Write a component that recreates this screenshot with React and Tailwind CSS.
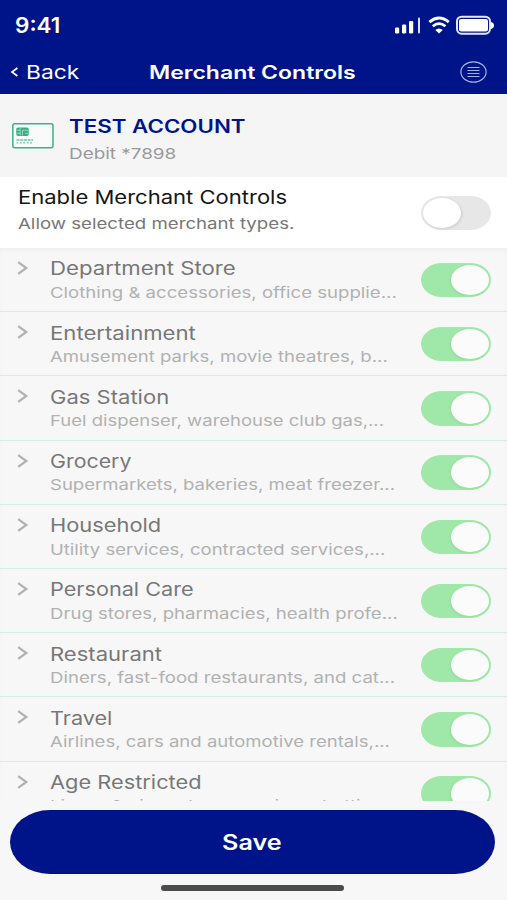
import { useLayoutEffect, useRef } from "react";

// Wide-set label: stretches its text horizontally to the given width.
function Wide({ width, className = "", children }) {
  const ref = useRef(null);
  useLayoutEffect(() => {
    const el = ref.current;
    el.style.transform = `scaleX(${width / el.offsetWidth})`;
  }, [width, children]);
  return (
    <div className="min-w-0" style={{ width }}>
      <span ref={ref} className={`inline-block origin-left whitespace-nowrap align-top ${className}`}>
        {children}
      </span>
    </div>
  );
}

const rows = [
  ["Department Store", 186, "Clothing & accessories, office supplie...", 347],
  ["Entertainment", 146, "Amusement parks, movie theatres, b...", 338],
  ["Gas Station", 119, "Fuel dispenser, warehouse club gas,...", 334],
  ["Grocery", 82, "Supermarkets, bakeries, meat freezer...", 345],
  ["Household", 111, "Utility services, contracted services,...", 335],
  ["Personal Care", 144, "Drug stores, pharmacies, health profe...", 348],
  ["Restaurant", 112, "Diners, fast-food restaurants, and cat...", 345],
  ["Travel", 62, "Airlines, cars and automotive rentals,...", 340],
  ["Age Restricted", 152, "Liquor & cigar stores, casinos, betti...", 327],
];

function Toggle({ on }) {
  return (
    <div
      className={`flex h-[34.5px] w-[70px] shrink-0 items-center px-[2px] [border-radius:21px/17.25px] ${
        on ? "justify-end bg-[#9fe8aa]" : "justify-start bg-[#e7e7e7]"
      }`}
    >
      <div
        className={`h-[30.5px] w-[38px] rounded-[50%] ${
          on ? "bg-[#fbfbfb] shadow-[-1px_1px_3px_rgba(0,0,0,0.06)]" : "bg-white shadow-[1px_1px_3px_rgba(0,0,0,0.12)]"
        }`}
      />
    </div>
  );
}

export default function App() {
  return (
    <div className="flex h-[900px] w-[507px] flex-col overflow-hidden bg-[#f7f7f7] font-[Inter,'Liberation_Sans',sans-serif]">
      <header className="h-[94px] shrink-0 bg-[#001489] text-white">
        <div className="flex h-[50px] items-center justify-between pl-[15px] pr-[12px]">
          <Wide width={45} className="pt-[1px] text-[21px] font-semibold leading-[50px]">9:41</Wide>
          <svg width="102" height="24" viewBox="393 12.5 102 24" fill="none">
            <rect x="395" y="27" width="4.2" height="6" rx="1.2" fill="#fff" />
            <rect x="402" y="24" width="4.2" height="9" rx="1.2" fill="#fff" />
            <rect x="409" y="20.5" width="4.2" height="12.5" rx="1.2" fill="#fff" />
            <rect x="418" y="17" width="2" height="16" rx="1" fill="#dde0f2" />
            <path d="M429.4 21.6Q439 13.4 448.8 21.6M432.8 25.8Q439 20.4 445.4 25.8" stroke="#fff" strokeWidth="2.8" />
            <path d="M435.3 29.6Q439 26.6 442.8 29.6L439 33Z" fill="#fff" />
            <rect x="457" y="16.2" width="33" height="17" rx="4.6" stroke="#e6e8f5" strokeWidth="2" />
            <rect x="459" y="18.4" width="29" height="12.6" rx="2.2" fill="#fff" />
            <path d="M491 21.5C495 22 495 28 491 28.5Z" fill="#fff" />
          </svg>
        </div>
        <div className="flex h-[44px] items-center pl-[10px] pr-[20px]">
          <svg width="8" height="12" viewBox="0 0 8 12" className="mr-[8px]" fill="none">
            <path d="M7.4 2L2 6L7.4 10" stroke="#fff" strokeWidth="1.7" />
          </svg>
          <Wide width={53} className="text-[18.5px] leading-[44px]">Back</Wide>
          <div className="ml-[70px] flex-1">
            <Wide width={207} className="pt-[1px] text-[18px] font-semibold leading-[44px]">Merchant Controls</Wide>
          </div>
          <svg width="27" height="22" viewBox="0 0 27 22" fill="none" stroke="#a9b0dc" strokeWidth="1.2">
            <ellipse cx="13.5" cy="11" rx="12.6" ry="10.2" />
            <path d="M7.5 6.5H19.5M7.5 9.5H19.5M7.5 12.5H19.5M7.5 15.5H19.5" />
          </svg>
        </div>
      </header>

      <section className="flex h-[83px] shrink-0 bg-[#f5f5f5] pl-[12px]">
        <svg width="42" height="26" viewBox="0 0 42 26" className="mr-[15px] mt-[29px]" fill="none">
          <rect x="0.8" y="0.8" width="40.2" height="24" rx="2" fill="#f8fbf9" stroke="#3db287" strokeWidth="1.5" />
          <rect x="4.2" y="4.5" width="12.6" height="8.6" rx="2" fill="#35ae82" />
          <path d="M4.5 7.3H8M4.5 10.3H8M13 7.3H16.5M13 10.3H16.5M8.2 5V12.5M12.8 7.3H10.5V12.5" stroke="#c5eadc" strokeWidth="0.7" />
          <path d="M4.5 17H21" stroke="#6cc4a5" strokeWidth="1.4" strokeDasharray="3 0.7" />
          <path d="M4.5 19.8H21" stroke="#6cc4a5" strokeWidth="1.2" strokeDasharray="1.8 1.6" />
        </svg>
        <div className="pt-[21px]">
          <Wide width={176} className="text-[18px] font-semibold leading-6 text-[#001489]">TEST ACCOUNT</Wide>
          <Wide width={107} className="mt-[3px] text-[15px] leading-6 text-[#999]">Debit *7898</Wide>
        </div>
      </section>

      <section className="flex h-[71px] shrink-0 items-start justify-between bg-white pl-[18px] pr-[16px]">
        <div className="pt-[8px]">
          <Wide width={269} className="text-[18.5px] leading-6 text-[#151515]">Enable Merchant Controls</Wide>
          <Wide width={276} className="mt-[3px] text-[15px] leading-6 text-[#777]">Allow selected merchant types.</Wide>
        </div>
        <div className="pt-[18.5px]">
          <Toggle on={false} />
        </div>
      </section>

      <main className="h-[553px] shrink-0 overflow-hidden shadow-[inset_0_3px_3px_rgba(0,0,0,0.03)]">
        {rows.map(([name, nameWidth, detail, detailWidth]) => (
          <div key={name} className="flex h-[64.2px] border-b border-[#d5ebe4] pl-[17px] pr-[16px]">
            <svg width="12" height="14" viewBox="0 0 12 14" className="mr-[21px] mt-[13px] shrink-0" fill="none">
              <path d="M1.2 1.2L9.3 7L1.2 12.8" stroke="#b1b1b1" strokeWidth="2.2" />
            </svg>
            <div className="flex-1 pt-[8.4px]">
              <Wide width={nameWidth} className="text-[18.5px] leading-6 text-[#777]">{name}</Wide>
              <Wide width={detailWidth} className="mt-[0.4px] text-[15px] leading-6 text-[#b1b1b1]">{detail}</Wide>
            </div>
            <div className="pt-[14.8px]">
              <Toggle on />
            </div>
          </div>
        ))}
      </main>

      <footer className="flex flex-1 flex-col items-center pr-[2px] pt-[9px]">
        <button className="flex h-[64px] w-[485px] items-center justify-center bg-[#001489] pr-[2px] pt-[1px] text-left text-white [border-radius:40px/32px]">
          <Wide width={60} className="text-[21px] font-semibold leading-8">Save</Wide>
        </button>
        <div className="mt-[11px] h-[6px] w-[183px] rounded-full bg-[#4b4b4b]" />
      </footer>
    </div>
  );
}
